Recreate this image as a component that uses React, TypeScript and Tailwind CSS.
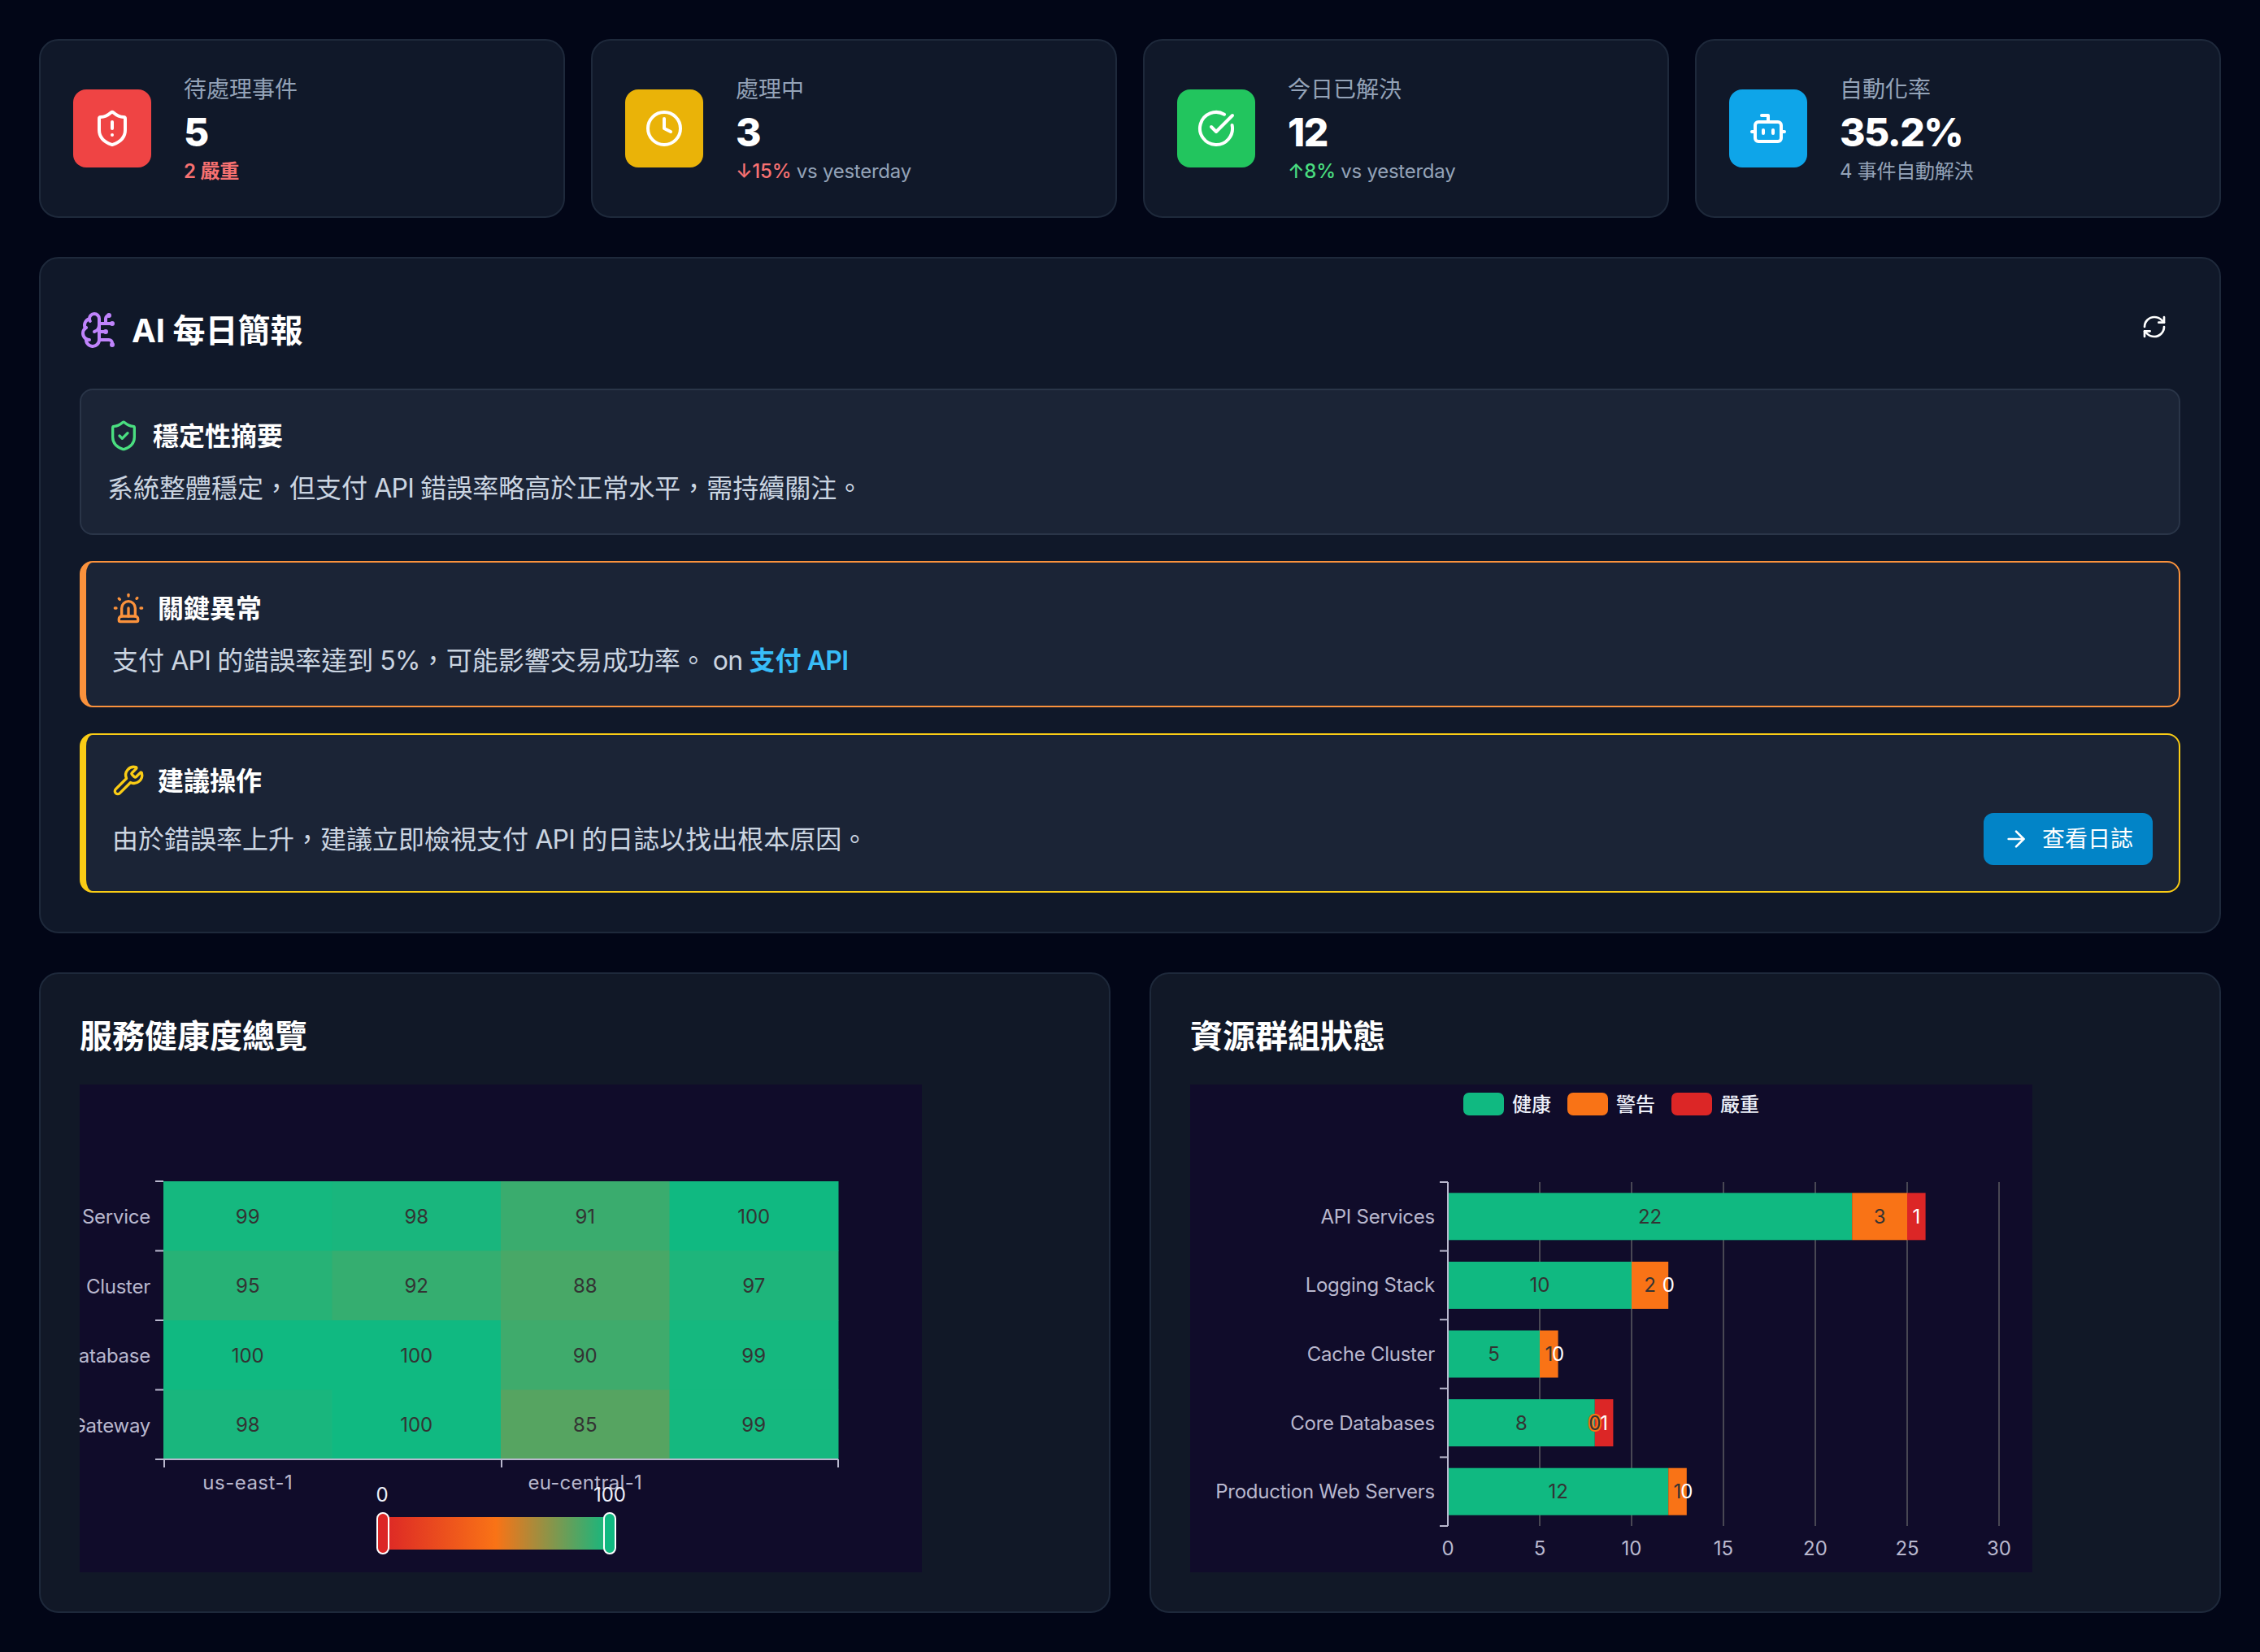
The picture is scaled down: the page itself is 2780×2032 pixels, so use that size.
import { ArrowRight, Bot, BrainCircuit, CircleCheckBig, Clock, RefreshCw, ShieldAlert, ShieldCheck, Siren, Wrench } from 'lucide-react';

const axisColor = '#B9B8CE';
const splitColor = '#484753';
const labelDark = '#333333';

const heatRows = [
    { name: 'Service', values: [99, 98, 91, 100] },
    { name: 'Cluster', values: [95, 92, 88, 97] },
    { name: 'Database', values: [100, 100, 90, 99] },
    { name: 'Gateway', values: [98, 100, 85, 99] },
];

const barRows = [
    { name: 'API Services', ok: 22, warn: 3, crit: 1 },
    { name: 'Logging Stack', ok: 10, warn: 2, crit: 0 },
    { name: 'Cache Cluster', ok: 5, warn: 1, crit: 0 },
    { name: 'Core Databases', ok: 8, warn: 0, crit: 1 },
    { name: 'Production Web Servers', ok: 12, warn: 1, crit: 0 },
];

// 50..100 runs from orange to green on the visual map
const heatColor = (v: number) => {
    const t = (v - 50) / 50;
    const r = Math.round(249 + (16 - 249) * t);
    const g = Math.round(115 + (185 - 115) * t);
    const b = Math.round(22 + (129 - 22) * t);
    return `rgb(${r},${g},${b})`;
};

const HeatmapChart = () => {
    const left = 103;
    const top = 119;
    const cellW = 207.5;
    const cellH = 85.5;
    const bottom = top + cellH * 4;
    const right = left + cellW * 4;

    return (
        <svg width="1036" height="600" viewBox="0 0 1036 600" className="block">
            <defs>
                <linearGradient id="heatScale" x1="0" y1="0" x2="1" y2="0">
                    <stop offset="0" stopColor="#dc2626" />
                    <stop offset="0.5" stopColor="#f97316" />
                    <stop offset="1" stopColor="#10b981" />
                </linearGradient>
            </defs>
            {heatRows.map((row, i) => (
                <g key={row.name}>
                    <text x={left - 16} y={top + cellH * i + cellH / 2 + 1} textAnchor="end" dominantBaseline="central" fontSize="24" letterSpacing="-0.25" fill={axisColor}>{row.name}</text>
                    {row.values.map((v, j) => (
                        <g key={j}>
                            <rect x={left + cellW * j} y={top + cellH * i} width={cellW + 0.5} height={cellH + 0.5} fill={heatColor(v)} />
                            <text x={left + cellW * j + cellW / 2} y={top + cellH * i + cellH / 2 + 0.5} textAnchor="middle" dominantBaseline="central" fontSize="24" fill={labelDark}>{v}</text>
                        </g>
                    ))}
                </g>
            ))}
            {[0, 1, 2, 3, 4].map(i => (
                <line key={i} x1={left - 10} x2={left} y1={top + cellH * i} y2={top + cellH * i} stroke={axisColor} strokeWidth="2" />
            ))}
            <line x1={left} x2={right} y1={bottom} y2={bottom} stroke={axisColor} strokeWidth="2" />
            {[0, 2, 4].map(i => (
                <line key={i} x1={left + cellW * i + (i === 4 ? 0 : 1)} x2={left + cellW * i + (i === 4 ? 0 : 1)} y1={bottom} y2={bottom + 10} stroke={axisColor} strokeWidth="2" />
            ))}
            <text x={left + cellW / 2} y={489} textAnchor="middle" dominantBaseline="central" fontSize="24" letterSpacing="0.5" fill={axisColor}>us-east-1</text>
            <text x={left + cellW * 2.5} y={489} textAnchor="middle" dominantBaseline="central" fontSize="24" letterSpacing="0.3" fill={axisColor}>eu-central-1</text>
            <rect x="372" y="532" width="280" height="40" fill="url(#heatScale)" />
            <rect x="366" y="527" width="14" height="50" rx="7" fill="#dc2626" stroke="#ffffff" strokeWidth="2" />
            <rect x="645" y="527" width="14" height="50" rx="7" fill="#10b981" stroke="#ffffff" strokeWidth="2" />
            <text x="372" y="504" textAnchor="middle" dominantBaseline="central" fontSize="24" fill="#EEF1FA">0</text>
            <text x="652" y="504" textAnchor="middle" dominantBaseline="central" fontSize="24" fill="#EEF1FA">100</text>
        </svg>
    );
};

const StackedBarChart = () => {
    const x0 = 317;
    const unit = 22.6;
    const top = 120;
    const band = 84.6;
    const barH = 58;
    const bottom = top + band * 5;
    const legend = [
        { label: '健康', color: '#10b981', x: 336 },
        { label: '警告', color: '#f97316', x: 464 },
        { label: '嚴重', color: '#dc2626', x: 592 },
    ];

    return (
        <svg width="1036" height="600" viewBox="0 0 1036 600" className="block">
            {legend.map(item => (
                <g key={item.label}>
                    <rect x={item.x} y="10" width="50" height="28" rx="7" fill={item.color} />
                    <text x={item.x + 60} y="24" dominantBaseline="central" fontSize="24" fontWeight="500" fill="#EEF1FA">{item.label}</text>
                </g>
            ))}
            {[5, 10, 15, 20, 25, 30].map(v => (
                <line key={v} x1={x0 + unit * v} x2={x0 + unit * v} y1={top} y2={bottom} stroke={splitColor} strokeWidth="2" />
            ))}
            {[0, 5, 10, 15, 20, 25, 30].map(v => (
                <text key={v} x={x0 + unit * v} y="570" textAnchor="middle" dominantBaseline="central" fontSize="24" fill={axisColor}>{v}</text>
            ))}
            {barRows.map((row, i) => {
                const y = top + band * i + (band - barH) / 2;
                const cy = y + barH / 2;
                const warnX = x0 + unit * row.ok;
                const critX = warnX + unit * row.warn;
                return (
                    <g key={row.name}>
                        <text x={x0 - 16} y={cy} textAnchor="end" dominantBaseline="central" fontSize="24" letterSpacing="-0.25" fill={axisColor}>{row.name}</text>
                        <rect x={x0} y={y} width={unit * row.ok} height={barH} fill="#10b981" />
                        <rect x={warnX} y={y} width={unit * row.warn} height={barH} fill="#f97316" />
                        <rect x={critX} y={y} width={unit * row.crit} height={barH} fill="#dc2626" />
                        <text x={x0 + (unit * row.ok) / 2} y={cy} textAnchor="middle" dominantBaseline="central" fontSize="24" fill={labelDark}>{row.ok}</text>
                        <text x={warnX + (unit * row.warn) / 2} y={cy} textAnchor="middle" dominantBaseline="central" fontSize="24" fill={labelDark} stroke={row.warn === 0 ? '#f97316' : 'none'} strokeWidth="4" paintOrder="stroke">{row.warn}</text>
                        <text x={critX + (unit * row.crit) / 2} y={cy} textAnchor="middle" dominantBaseline="central" fontSize="24" fill="#ffffff">{row.crit}</text>
                    </g>
                );
            })}
            <line x1={x0} x2={x0} y1={top} y2={bottom} stroke={axisColor} strokeWidth="2" />
            {[0, 1, 2, 3, 4, 5].map(i => (
                <line key={i} x1={x0 - 10} x2={x0} y1={top + band * i} y2={top + band * i} stroke={axisColor} strokeWidth="2" />
            ))}
        </svg>
    );
};

const StatCard = ({ icon, iconBg, label, value, children }: { icon: React.ReactNode; iconBg: string; label: string; value: string; children: React.ReactNode }) => (
    <div className="flex items-center gap-10 rounded-3xl border-2 border-[#1e293b] bg-[#101829] p-10">
        <div className={`flex h-24 w-24 items-center justify-center rounded-2xl ${iconBg}`}>{icon}</div>
        <div>
            <div className="text-[28px] leading-10 text-[#94a3b8]">{label}</div>
            <div className="pt-[2px] text-5xl leading-[62px] font-extrabold tracking-[-1.5px] text-white">{value}</div>
            <div className="pt-[2px] text-2xl leading-[30px] tracking-[-0.25px] text-[#94a3b8]">{children}</div>
        </div>
    </div>
);

const BriefHeading = ({ icon, title }: { icon: React.ReactNode; title: string }) => (
    <div className="mb-4 flex items-center gap-4">
        {icon}
        <h4 className="pt-[2px] text-[32px] leading-[46px] font-bold text-white">{title}</h4>
    </div>
);

// latin runs sit a little tighter than the CJK around them
const Latin = ({ children }: { children: React.ReactNode }) => <span className="tracking-[-0.8px]">{children}</span>;

export default function App() {
    return (
        <div className="flex min-h-screen flex-col gap-12 bg-[#020617] p-12 font-['Inter','Noto_Sans_CJK_TC',sans-serif]">
            {/* Stats */}
            <div className="grid grid-cols-4 gap-8">
                <StatCard icon={<ShieldAlert size={48} className="text-white" />} iconBg="bg-[#ef4444]" label="待處理事件" value="5">
                    <span className="font-semibold text-[#f87171]">2 嚴重</span>
                </StatCard>
                <StatCard icon={<Clock size={48} className="text-white" />} iconBg="bg-[#eab308]" label="處理中" value="3">
                    <span className="font-medium text-[#f87171]">↓15%</span> vs yesterday
                </StatCard>
                <StatCard icon={<CircleCheckBig size={48} className="text-white" />} iconBg="bg-[#22c55e]" label="今日已解決" value="12">
                    <span className="font-medium text-[#4ade80]">↑8%</span> vs yesterday
                </StatCard>
                <StatCard icon={<Bot size={48} className="text-white" />} iconBg="bg-[#0ea5e9]" label="自動化率" value="35.2%">
                    4 事件自動解決
                </StatCard>
            </div>

            {/* AI Brief */}
            <section className="rounded-3xl border-2 border-[#1e293b] bg-[#101829] p-12">
                <div className="mb-8 flex h-20 items-start justify-between">
                    <div className="flex h-20 items-center gap-4">
                        <BrainCircuit size={48} className="text-[#c084fc]" />
                        <h3 className="pt-[2px] text-[40px] leading-[54px] font-bold text-white">AI 每日簡報</h3>
                    </div>
                    <button type="button" className="mt-1 rounded-xl p-4 text-white">
                        <RefreshCw size={32} />
                    </button>
                </div>

                <div className="flex flex-col gap-8">
                    <div className="rounded-2xl border-2 border-[#2a3548] bg-[#1b2436] p-8">
                        <BriefHeading icon={<ShieldCheck size={40} className="text-[#4ade80]" />} title="穩定性摘要" />
                        <p className="pt-[2px] text-[32px] leading-[46px] text-[#cbd5e1]">系統整體穩定，但支付<Latin> API </Latin>錯誤率略高於正常水平，需持續關注。</p>
                    </div>
                    <div className="rounded-2xl border-2 border-l-8 border-[#fb923c] bg-[#1b2436] p-8">
                        <BriefHeading icon={<Siren size={40} className="text-[#fb923c]" />} title="關鍵異常" />
                        <p className="pt-[2px] text-[32px] leading-[46px] text-[#cbd5e1]">
                            支付<Latin> API </Latin>的錯誤率達到<Latin> 5%</Latin>，可能影響交易成功率。<Latin> on </Latin><span className="font-semibold text-[#38bdf8]">支付<Latin> API</Latin></span>
                        </p>
                    </div>
                    <div className="rounded-2xl border-2 border-l-8 border-[#facc15] bg-[#1b2436] p-8">
                        <BriefHeading icon={<Wrench size={40} className="text-[#facc15]" />} title="建議操作" />
                        <div className="flex items-center justify-between">
                            <p className="pt-[2px] text-[32px] leading-[46px] text-[#cbd5e1]">由於錯誤率上升，建議立即檢視支付<Latin> API </Latin>的日誌以找出根本原因。</p>
                            <button type="button" className="flex items-center gap-4 rounded-xl bg-[#0284c7] px-6 py-3 text-[28px] leading-10 font-normal text-white">
                                <ArrowRight size={32} />
                                查看日誌
                            </button>
                        </div>
                    </div>
                </div>
            </section>

            {/* Charts */}
            <div className="grid grid-cols-2 gap-12">
                <div className="rounded-3xl border-2 border-[#1e293b] bg-[#111827] p-12">
                    <h3 className="mb-8 pt-[2px] text-[40px] leading-[54px] font-bold text-white">服務健康度總覽</h3>
                    <div className="h-[600px] w-[1036px] overflow-hidden bg-[#100C2A]">
                        <HeatmapChart />
                    </div>
                </div>
                <div className="rounded-3xl border-2 border-[#1e293b] bg-[#111827] p-12">
                    <h3 className="mb-8 pt-[2px] text-[40px] leading-[54px] font-bold text-white">資源群組狀態</h3>
                    <div className="h-[600px] w-[1036px] overflow-hidden bg-[#100C2A]">
                        <StackedBarChart />
                    </div>
                </div>
            </div>
        </div>
    );
}
